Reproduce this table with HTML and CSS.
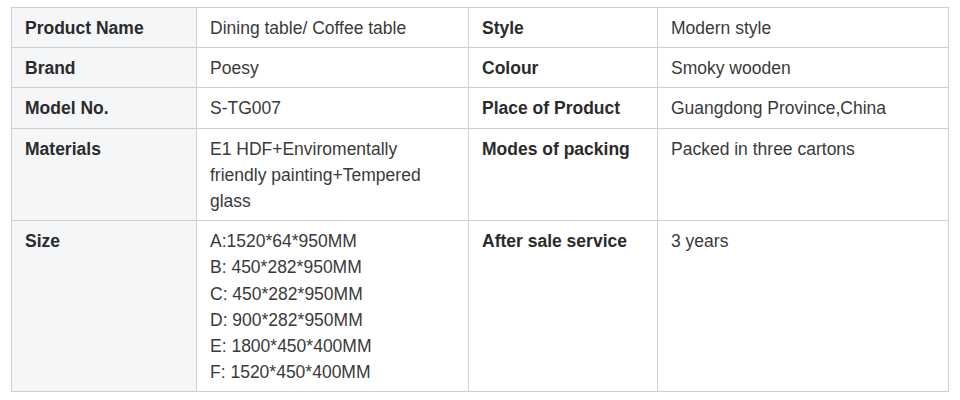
FILE: index.html
```html
<!DOCTYPE html>
<html lang="en">
<head>
<meta charset="utf-8">
<title>Product specification</title>
<link rel="stylesheet" href="styles.css">
</head>
<body>
<div class="wrap">
<table class="spec">
  <colgroup>
    <col class="c1"><col class="c2"><col class="c3"><col class="c4">
  </colgroup>
  <tbody>
    <tr>
      <th class="k1">Product Name</th><td>Dining table/ Coffee table</td>
      <th>Style</th><td>Modern style</td>
    </tr>
    <tr>
      <th class="k1">Brand</th><td>Poesy</td>
      <th>Colour</th><td>Smoky wooden</td>
    </tr>
    <tr>
      <th class="k1">Model No.</th><td>S-TG007</td>
      <th>Place of Product</th><td>Guangdong Province,China</td>
    </tr>
    <tr>
      <th class="k1">Materials</th><td>E1 HDF+Enviromentally friendly painting+Tempered glass</td>
      <th>Modes of packing</th><td>Packed in three cartons</td>
    </tr>
    <tr>
      <th class="k1">Size</th>
      <td>A:1520*64*950MM<br>B: 450*282*950MM<br>C: 450*282*950MM<br>D: 900*282*950MM<br>E: 1800*450*400MM<br>F: 1520*450*400MM</td>
      <th>After sale service</th><td>3 years</td>
    </tr>
  </tbody>
</table>
</div>
</body>
</html>
```

FILE: styles.css
```css
html, body {
  margin: 0;
  padding: 0;
  background: #fff;
}
.wrap {
  padding: 7px 0 0 11px;
}
.spec {
  border-collapse: collapse;
  table-layout: fixed;
  width: 937px;
  font-family: "Liberation Sans", Arial, sans-serif;
  font-size: 17.5px;
  line-height: 26.2px;
  color: #333;
}
.c1 { width: 185px; }
.c2 { width: 272px; }
.c3 { width: 189px; }
.c4 { width: 291px; }
.spec th,
.spec td {
  border: 1px solid #cfcfcf;
  padding: 7px 13px 6px;
  text-align: left;
  vertical-align: top;
}
.spec th {
  font-weight: bold;
  color: #2b2b2b;
}
.spec td {
  font-weight: normal;
  color: #3a3a3a;
}
.spec .k1 {
  background: #f5f6f8;
}
```
